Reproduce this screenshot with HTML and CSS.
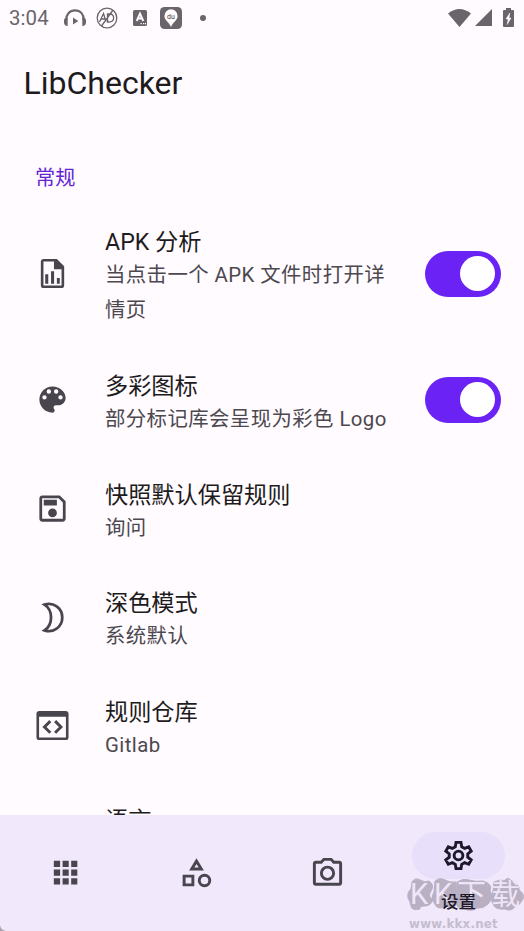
FILE: index.html
```html
<!DOCTYPE html>
<html lang="zh-CN">
<head>
<meta charset="utf-8">
<title>LibChecker</title>
<link rel="stylesheet" href="styles.css">
</head>
<body>
<div class="screen">
  <header class="status">
    <span class="time">3:04</span>
    <svg class="s-head" width="22" height="18" viewBox="0 0 22 18"><path d="M2.200 11C2.200 5 5.800 1.300 11 1.300S19.800 5 19.800 11" fill="none" stroke="currentColor" stroke-width="2.200"/><path d="M0 11.500Q0 8.500 3.700 8.500V17Q0 17 0 13zM22 11.500Q22 8.500 18.300 8.500V17Q22 17 22 13zM9 8.500l5.300 3.500L9 15.500z" fill="currentColor"/></svg>
    <svg class="s-ad" width="22" height="22" viewBox="0 0 22 22"><g fill="none" stroke="currentColor" stroke-width="1.300"><circle cx="11" cy="11" r="9.800"/><path d="M5.500 19L17 3M3.500 15L7.500 6.500L10 14.500M5 12h4M11.500 7v8h1.500c6 0 6-8 1-8z"/></g></svg>
    <svg class="s-a" width="14" height="16" viewBox="0 0 14 16"><rect width="14" height="16" rx="1.500" fill="currentColor"/><path d="M3.700 11L7 3.500L10.300 11M5 8.500h4" fill="none" stroke="#fffbff" stroke-width="1.900"/><path d="M7.500 13h1.300v1.300H7.500zM10 13h1.300v1.300H10zM12 13h1v1.300h-1z" fill="#fffbff"/></svg>
    <svg class="s-du" width="22" height="22" viewBox="0 0 22 22"><rect width="22" height="22" rx="4.500" fill="currentColor"/><path d="M11 2.300a6.600 6.600 0 0 0-6.600 6.600c0 4 4.600 6 6.600 11.100 2-5.100 6.600-7.100 6.600-11.100A6.600 6.600 0 0 0 11 2.300z" fill="#fffbff"/><text x="11" y="11.500" text-anchor="middle" class="du">du</text></svg>
    <span class="dot"></span>
    <svg class="s-wifi" width="23" height="18" viewBox="0 0 23 18"><path d="M0 4.500Q11.500-4.500 23 4.500L11.500 18z" fill="currentColor"/></svg>
    <svg class="s-cell" width="17" height="17" viewBox="0 0 17 17"><path d="M17 0v17H0z" fill="currentColor"/></svg>
    <svg class="s-bat" width="11" height="19" viewBox="0 0 11 19"><path d="M3 0h5v2h2q1 0 1 1v15q0 1-1 1H1q-1 0-1-1V3q0-1 1-1h2z" fill="currentColor"/><path d="M6.800 5L3 11h2.200L4.200 16.500L8 10H6z" fill="#fffbff" stroke="#fffbff" stroke-width=".5"/></svg>
  </header>
  <h1 class="title">LibChecker</h1>
  <main class="list">
    <h2 class="section">常规</h2>
    <div class="row">
      <svg class="icon" viewBox="0 0 24 24"><path fill-rule="evenodd" d="M6 2h9l5 5v13q0 2-2 2H6q-2 0-2-2V4q0-2 2-2zM5.800 3.800v16.400h12.400V9H13V3.800z"/><path d="M7 12.500h2.100v6.500H7zM11 10.500h2.100v8.500H11zM15 15h2v4h-2z"/></svg>
      <div class="text"><div class="name">APK 分析</div><div class="desc">当点击一个 APK 文件时打开详情页</div></div>
      <span class="switch"></span>
    </div>
    <div class="row">
      <svg class="icon" viewBox="0 0 24 24"><path d="M12 3c-4.970 0-9 4.030-9 9s4.030 9 9 9c.830 0 1.500-.670 1.500-1.500 0-.390-.150-.740-.390-1.010-.230-.260-.380-.610-.380-.990 0-.830.670-1.500 1.500-1.500H16c2.760 0 5-2.240 5-5 0-4.420-4.030-8-9-8zm-5.500 9a1.500 1.500 0 1 1 0-3 1.500 1.500 0 0 1 0 3zm3-4a1.500 1.500 0 1 1 0-3 1.500 1.500 0 0 1 0 3zm5 0a1.500 1.500 0 1 1 0-3 1.500 1.500 0 0 1 0 3zm3 4a1.500 1.500 0 1 1 0-3 1.500 1.500 0 0 1 0 3z"/></svg>
      <div class="text"><div class="name">多彩图标</div><div class="desc">部分标记库会呈现为彩色 Logo</div></div>
      <span class="switch"></span>
    </div>
    <div class="row">
      <svg class="icon" viewBox="0 0 24 24"><path fill-rule="evenodd" d="M17 3H5c-1.110 0-2 .9-2 2v14c0 1.100.890 2 2 2h14c1.100 0 2-.9 2-2V7l-4-4zm2.100 16.100H4.900V4.900h11.300l2.900 2.900zM12 12a3 3 0 1 0 0 6 3 3 0 0 0 0-6zM6 6h9v4H6z"/></svg>
      <div class="text"><div class="name">快照默认保留规则</div><div class="desc">询问</div></div>
    </div>
    <div class="row">
      <svg class="icon" viewBox="0 0 24 24"><path d="M6.500 3.200C12.500 1.100 18.700 5.500 18.700 12S12.500 22.900 6.500 20.800C12.500 17 12.500 7 6.500 3.200z" fill="none" stroke="currentColor" stroke-width="1.900"/></svg>
      <div class="text"><div class="name">深色模式</div><div class="desc">系统默认</div></div>
    </div>
    <div class="row">
      <svg class="icon" viewBox="0 0 24 24"><path fill-rule="evenodd" d="M3 2h18q2 0 2 2v16q0 2-2 2H3q-2 0-2-2V4q0-2 2-2zM2.800 6v14.200h18.400V6z"/><path d="M10.500 9L6.500 13L10.500 17M13.800 9L17.800 13L13.800 17" fill="none" stroke="currentColor" stroke-width="2"/></svg>
      <div class="text"><div class="name">规则仓库</div><div class="desc">Gitlab</div></div>
    </div>
    <div class="row">
      <span class="icon"></span>
      <div class="text"><div class="name">语言</div></div>
    </div>
  </main>
  <nav class="nav">
    <div class="tab"><svg class="nicon" viewBox="0 0 24 24"><path d="M4 4h4.300v4.300H4zM10 4h4.200v4.300H10zM15.900 4h4.200v4.300h-4.200zM4 10h4.300v4.200H4zM10 10h4.200v4.200H10zM15.900 10h4.200v4.200h-4.200zM4 16h4.300v4.200H4zM10 16h4.200v4.200H10zM15.900 16h4.200v4.200h-4.200z"/></svg></div>
    <div class="tab"><svg class="nicon" viewBox="0 0 24 24"><g fill="none" stroke="currentColor" stroke-width="2"><path d="M12 4.200L8.700 9.600h6.600zM3.500 14.500h6v6h-6z"/><circle cx="17.500" cy="17.500" r="3.600"/></g></svg></div>
    <div class="tab"><svg class="nicon" viewBox="0 0 24 24"><g fill="none" stroke="currentColor" stroke-width="2"><path d="M4 5h3.700l1.800-2h5l1.800 2H20q1 0 1 1v13q0 1-1 1H4q-1 0-1-1V6q0-1 1-1z"/><circle cx="12" cy="12.500" r="4.200"/></g></svg></div>
    <div class="tab active">
      <span class="pill"><svg class="nicon" viewBox="0 0 24 24"><g fill="none" stroke="currentColor" stroke-width="2"><path d="M10.300 3h3.400l.5 3 2 1.150 2.800-1.050 1.700 2.950-2.350 1.850v2.300l2.350 1.850L19 18l-2.800-1.100-2 1.150-.5 2.950h-3.400l-.5-2.950-2-1.150L5 18l-1.700-2.950 2.350-1.850v-2.300L3.300 9.050 5 6.100l2.800 1.050 2-1.150z"/><circle cx="12" cy="12" r="3"/></g></svg></span>
      <span class="label">设置</span>
    </div>
    <div class="mark">
      <svg width="117" height="34" viewBox="0 0 117 34"><g class="blot"><path d="M5 4Q8-1 13 2T22 3Q28 7 24 13T26 21Q24 28 18 28T13 31Q5 33 4 28T1 20Q0 14 4 11z"/><path d="M28 3Q33-1 38 2T49 4V14Q56 20 50 26Q45 33 40 28Q32 32 29 28Q23 20 27 14z"/><path d="M50 4Q56 0 62 2T76 3Q86 6 83 13Q86 21 81 26T70 30Q64 34 58 31Q48 31 49 22z"/><path d="M87 4Q94 1 97 3Q101-2 105 3Q113 7 112 12Q118 16 116 21Q113 27 109 28Q104 34 98 31Q88 32 86 26Q82 19 86 13z"/></g><g class="wm"><text x="3" y="26">K</text><text x="27" y="26">K</text><text x="50" y="27">下</text><text x="84" y="27">载</text></g></svg>
      <span class="url">www.kkx.net</span>
    </div>
  </nav>
  <svg class="corner" width="6" height="6" viewBox="0 0 6 6"><path d="M0 0Q.5 5 6 6H0z" fill="#a9a3ae"/></svg>
</div>
</body>
</html>
```

FILE: styles.css
```css
* { box-sizing: border-box; }
body { margin: 0; background: #fffbff; font-family: Roboto, "Noto Sans CJK SC", sans-serif; }
svg { display: block; flex: none; }
.screen { position: relative; width: 524px; height: 931px; overflow: hidden; display: flex; flex-direction: column; background: #fffbff; }
.status { height: 35px; flex: none; display: flex; align-items: center; padding: 0 9px; color: #69656b; }
.time { font-size: 20.4px; line-height: 36px; width: 55px; letter-spacing: .1px; }
.s-ad { margin-left: 10px; }
.s-a { margin-left: 15px; }
.s-du { margin-left: 13px; }
.du { font: 7px Roboto, sans-serif; fill: #3f3b42; }
.dot { width: 6px; height: 6px; border-radius: 50%; background: currentColor; margin-left: 18px; }
.s-wifi { margin-left: auto; }
.s-cell { margin-left: 4px; }
.s-bat { margin: 0 1px 0 11px; }
.title { margin: 0; height: 95px; flex: none; padding-left: 23.5px; font-size: 32px; font-weight: 400; line-height: 97px; color: #1d1b20; }
.list { flex: 1; min-height: 0; overflow: hidden; padding-top: 23px; }
.section { margin: 0; height: 49px; padding-left: 35px; font-size: 20.2px; line-height: 50px; font-weight: 400; color: #6424d3; }
.row { display: flex; align-items: center; padding: 0 23px 0 35px; }
.icon { width: 35px; height: 35px; flex: none; fill: currentColor; color: #49454e; }
.text { width: 290px; margin-left: 35px; padding: 25.4px 0 17.2px; }
.row:last-child { align-items: flex-start; }
.name { font-size: 23.2px; line-height: 31px; color: #1d1b20; }
.desc { font-size: 20.4px; line-height: 35px; letter-spacing: .42px; color: #4c484f; }
.switch { width: 76px; height: 46px; margin-left: auto; border-radius: 23px; background: #6a22f5; display: flex; align-items: center; justify-content: flex-end; padding-right: 6px; }
.switch::after { content: ""; width: 35px; height: 35px; border-radius: 50%; background: #fff; }
.nav { position: relative; height: 116px; flex: none; display: grid; grid-template-columns: repeat(4, 1fr); background: #f1e8fb; }
.tab { display: flex; flex-direction: column; align-items: center; justify-content: center; padding-bottom: 2px; color: #49454e; }
.nicon { width: 35px; height: 35px; fill: currentColor; }
.active { justify-content: flex-start; padding-top: 17px; color: #1d192b; }
.pill { width: 93px; height: 47px; border-radius: 24px; background: #e8dffa; display: flex; align-items: center; justify-content: center; }
.label { position: relative; z-index: 2; font-size: 17.5px; line-height: 24px; margin-top: 11px; font-weight: 500; }
.mark { position: absolute; left: 407px; top: 63px; width: 117px; }
.blot { fill: #b9b0c3; stroke: #b9b0c3; stroke-width: 1; stroke-linejoin: round; }
.wm { font: 29px Roboto, "Noto Sans CJK SC", sans-serif; fill: #eee5f8; }
.url { display: block; font: bold 11.8px/14px "DejaVu Sans", sans-serif; letter-spacing: .25px; color: #c5bdcf; padding-left: 2px; margin-top: 5px; white-space: nowrap; }
.corner { position: absolute; left: 0; bottom: 0; }
```
